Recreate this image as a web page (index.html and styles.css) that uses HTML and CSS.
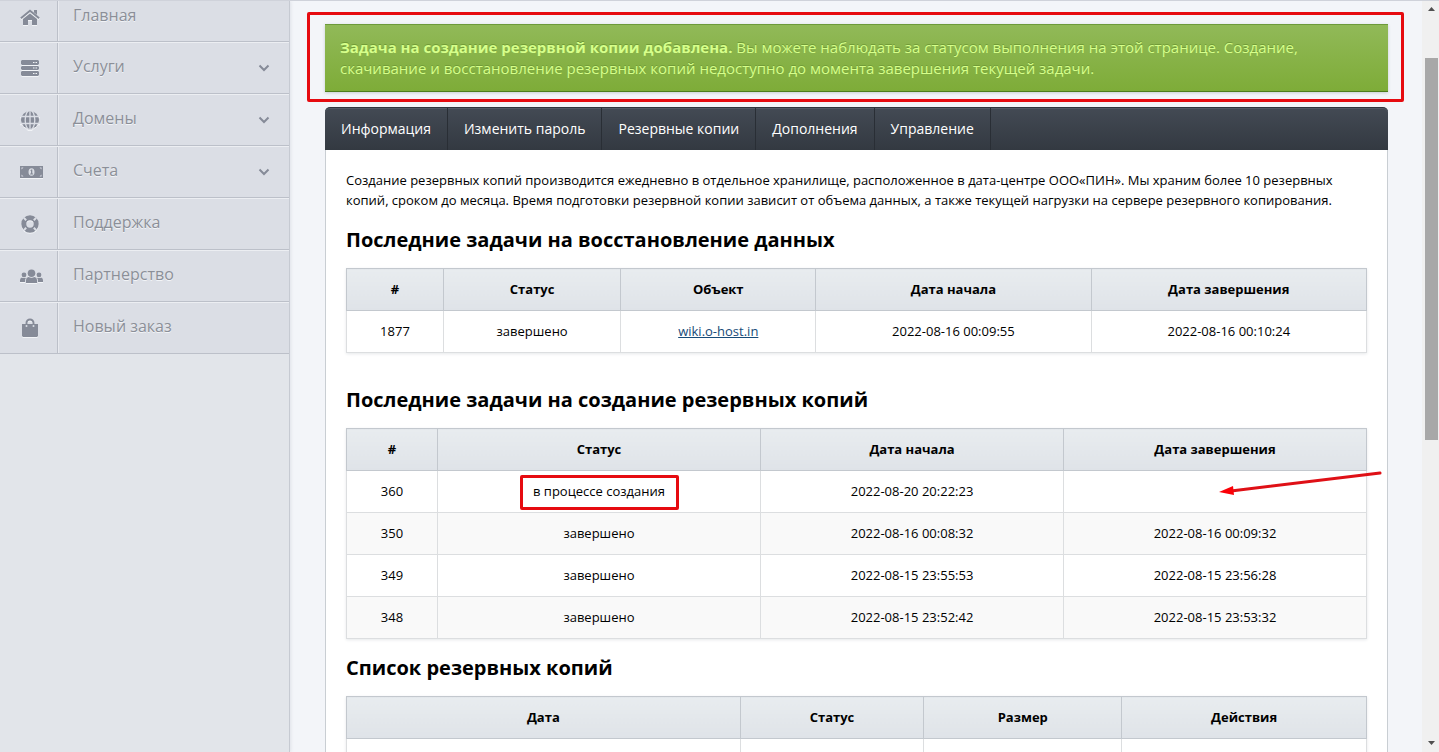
FILE: index.html
```html
<!DOCTYPE html>
<html lang="ru">
<head>
<meta charset="utf-8">
<title>Резервные копии</title>
<link rel="stylesheet" href="styles.css">
</head>
<body>
<div class="page">
  <nav class="sidebar" aria-label="Меню">
    <a class="item" href="#"><span class="icon"><svg width="20" height="17" viewBox="0 0 20 17"><path d="M10 4.400 3 10V16h5v-5h4v5h5v-6z"/><path d="M.9 9.200 10 1.700l9.100 7.500" class="line"/><path d="M14 1h3v5l-3-2.500z"/></svg></span><span class="label">Главная</span></a>
    <a class="item" href="#"><span class="icon"><svg width="20" height="18" viewBox="0 0 20 18"><path fill-rule="evenodd" d="M2 1h16l1 1v3l-1 1H2L1 5V2zM13 3v1h1.500V3zm2.500 0v1H17V3zM2 7h16l1 1v2l-1 1H2l-1-1V8zM13 8.500v1h1.500v-1zm2.500 0v1H17v-1zM2 12h16l1 1v3l-1 1H2l-1-1v-3zM13 14v1h1.500v-1zm2.500 0v1H17v-1z"/></svg></span><span class="label">Услуги</span><svg class="chevron" width="12" height="8" viewBox="0 0 12 8"><path d="m1.500 1.500 4.500 4.500 4.500-4.500"/></svg></a>
    <a class="item" href="#"><span class="icon"><svg width="20" height="20" viewBox="0 0 20 20"><circle cx="10" cy="10" r="9"/><g class="cut"><path d="M0 6.500h20M0 13.500h20M10 0v20"/><ellipse cx="10" cy="10" rx="4.800" ry="10"/></g></svg></span><span class="label">Домены</span><svg class="chevron" width="12" height="8" viewBox="0 0 12 8"><path d="m1.500 1.500 4.500 4.500 4.500-4.500"/></svg></a>
    <a class="item" href="#"><span class="icon shifted"><svg width="23" height="13" viewBox="0 0 23 13"><path d="M0 0h23v12H0z"/><ellipse cx="11.500" cy="6" rx="3" ry="3.800" class="hole"/><path d="M10.300 4.500 11.300 3.500h1v4h.8v1h-3v-1h.9V5z"/><path class="hole" d="M1.500 1.500h2l-2 2zM21.500 1.500h-2l2 2zM1.500 10.500h2l-2-2zM21.500 10.500h-2l2-2z"/></svg></span><span class="label">Счета</span><svg class="chevron" width="12" height="8" viewBox="0 0 12 8"><path d="m1.500 1.500 4.500 4.500 4.500-4.500"/></svg></a>
    <a class="item" href="#"><span class="icon"><svg width="20" height="20" viewBox="0 0 20 20"><circle cx="10" cy="10" r="6.200" class="ring"/><path class="cut" d="m3.800 3.800 2.400 2.400M16.200 3.800l-2.400 2.400M3.800 16.200l2.400-2.400M16.200 16.200l-2.400-2.400"/></svg></span><span class="label">Поддержка</span></a>
    <a class="item" href="#"><span class="icon shifted"><svg width="23" height="15" viewBox="0 0 23 15"><circle cx="11.500" cy="4.300" r="3.800"/><circle cx="4" cy="6" r="2.400"/><circle cx="19" cy="6" r="2.400"/><path d="M6 14v-3q0-2.500 2.500-3 3 1.500 6 0 2.500.5 2.500 3v3zM0 13v-2q0-2 2-2.500 2 1 4 0Q5 10 5 13zM23 13v-2q0-2-2-2.500-2 1-4 0 1 1.500 1 4.500z"/></svg></span><span class="label">Партнерство</span></a>
    <a class="item" href="#"><span class="icon"><svg width="18" height="20" viewBox="0 0 18 20"><path d="M1 6h16v12l-1 1H2l-1-1z"/><path class="line" d="M5.500 6V5a3.500 3.500 0 0 1 7 0v1"/><circle cx="5.500" cy="8" r="1" class="hole"/><circle cx="12.500" cy="8" r="1" class="hole"/></svg></span><span class="label">Новый заказ</span></a>
  </nav>

  <main class="content">
    <div class="alert" role="status"><strong>Задача на создание резервной копии добавлена.</strong> Вы можете наблюдать за статусом выполнения на этой странице. Создание, скачивание и восстановление резервных копий недоступно до момента завершения текущей задачи.</div>

    <nav class="tabs" aria-label="Разделы">
      <a href="#">Информация</a><a href="#">Изменить пароль</a><a href="#">Резервные копии</a><a href="#">Дополнения</a><a href="#">Управление</a>
    </nav>

    <section class="panel">
      <p>Создание резервных копий производится ежедневно в отдельное хранилище, расположенное в дата-центре ООО«ПИН». Мы храним более 10 резервных копий, сроком до месяца. Время подготовки резервной копии зависит от объема данных, а также текущей нагрузки на сервере резервного копирования.</p>

      <h2>Последние задачи на восстановление данных</h2>
      <table class="restore">
        <colgroup><col class="r-id"><col class="r-status"><col class="r-object"><col class="r-date"><col class="r-date"></colgroup>
        <thead><tr><th>#</th><th>Статус</th><th>Объект</th><th>Дата начала</th><th>Дата завершения</th></tr></thead>
        <tbody><tr><td>1877</td><td>завершено</td><td><a href="#">wiki.o-host.in</a></td><td>2022-08-16 00:09:55</td><td>2022-08-16 00:10:24</td></tr></tbody>
      </table>

      <h2>Последние задачи на создание резервных копий</h2>
      <table class="create">
        <colgroup><col class="c-id"><col class="c-status"><col class="c-date"><col class="c-date"></colgroup>
        <thead><tr><th>#</th><th>Статус</th><th>Дата начала</th><th>Дата завершения</th></tr></thead>
        <tbody>
          <tr><td>360</td><td><span class="marked">в процессе создания</span></td><td>2022-08-20 20:22:23</td><td class="pending"><svg class="arrow" width="164" height="26" viewBox="0 0 164 26"><path class="shaft" d="M162 2 13 20"/><path class="head" d="m1 21 14-6 1 9z"/></svg></td></tr>
          <tr><td>350</td><td>завершено</td><td>2022-08-16 00:08:32</td><td>2022-08-16 00:09:32</td></tr>
          <tr><td>349</td><td>завершено</td><td>2022-08-15 23:55:53</td><td>2022-08-15 23:56:28</td></tr>
          <tr><td>348</td><td>завершено</td><td>2022-08-15 23:52:42</td><td>2022-08-15 23:53:32</td></tr>
        </tbody>
      </table>

      <h2>Список резервных копий</h2>
      <table class="copies">
        <colgroup><col class="l-date"><col class="l-status"><col class="l-size"><col class="l-actions"></colgroup>
        <thead><tr><th>Дата</th><th>Статус</th><th>Размер</th><th>Действия</th></tr></thead>
        <tbody><tr><td></td><td></td><td></td><td></td></tr></tbody>
      </table>
    </section>
  </main>

  <div class="scrollbar" aria-hidden="true">
    <svg width="7" height="4" viewBox="0 0 7 4"><path d="M0 4h7L3.500 0z"/></svg>
    <div class="track"><div class="thumb"></div></div>
    <svg width="7" height="4" viewBox="0 0 7 4"><path d="M0 0h7L3.500 4z"/></svg>
  </div>
</div>
</body>
</html>
```

FILE: styles.css
```css
* { box-sizing: border-box; }

body {
  margin: 0;
  font: 13px/20px "Open Sans", "Noto Sans", sans-serif;
  color: #000;
  background: #f3f5f9;
}

.page {
  display: flex;
  height: 100vh;
  overflow: hidden;
  border-top: 1px solid #cfd2da;
}

/* Sidebar */
.sidebar {
  flex: 0 0 290px;
  background: #e2e5ea;
  border-right: 1px solid #c6cad2;
  box-shadow: 1px 0 3px #dfe2e8;
}

.item {
  display: flex;
  align-items: center;
  height: 52px;
  padding-right: 19px;
  background: #dbdee5;
  border-top: 1px solid #eceef2;
  border-bottom: 1px solid #bcc0c9;
  color: #8b8f98;
  font-size: 16px;
  text-decoration: none;
  text-shadow: 0 1px 0 #f2f4f7;
}

.item:first-child { height: 41px; border-top: 0; }
.item:first-child .icon { padding-bottom: 7px; }
.item:first-child .label { padding-bottom: 12px; }

.icon {
  display: flex;
  align-items: center;
  justify-content: center;
  align-self: stretch;
  flex: 0 0 58px;
  padding-left: 3px;
  border-right: 1px solid #bcc0c9;
  box-shadow: 1px 0 0 #e8eaef;
}

.shifted { padding-left: 6px; }

.icon svg { fill: #868b98; filter: drop-shadow(0 1px 0 #f2f4f7); }
.icon .line { fill: none; stroke: #868b98; stroke-width: 2; }
.icon .ring { fill: none; stroke: #868b98; stroke-width: 5; }
.icon .cut { fill: none; stroke: #dbdee5; stroke-width: 1.3; }
.icon path.cut { stroke-width: 2; }
.icon .hole { fill: #dbdee5; }

.label { flex: 1; padding: 0 0 4px 15px; }

.chevron { fill: none; stroke: #868b98; stroke-width: 2; }

/* Content */
.content { flex: 1; min-width: 0; padding: 23px 34px 0 35px; }

.alert {
  position: relative;
  padding: 12px 15px;
  border-top: 1px solid #6d9a3b;
  border-bottom: 1px solid #4d7d1b;
  background: linear-gradient(#91b958, #7eac38);
  box-shadow: 0 1px 3px #c9ced3;
  color: #d6ff8a;
  font-size: 15px;
  line-height: 21px;
  text-shadow: 0 -1px 0 #719b38;
}

.alert::after {
  content: "";
  position: absolute;
  inset: -13px -16px -11px -18px;
  border: 3px solid #e60b10;
  border-radius: 2px;
}

.tabs {
  display: flex;
  margin-top: 15px;
  background: linear-gradient(#434a54, #333941);
  border-top: 1px solid #30353d;
  border-radius: 5px 5px 0 0;
  box-shadow: inset 0 1px 0 #535a65;
}

.tabs a {
  padding: 11px 16px;
  border-right: 1px solid #292e35;
  color: #fff;
  font-size: 14px;
  text-decoration: none;
}

.panel {
  padding: 20px 20px 0;
  background: #fff;
  border: solid #c9ced3;
  border-width: 0 1px;
}

.panel p { margin: 0 0 16px; }

h2 {
  margin: 0 0 15px;
  font-size: 20px;
  line-height: 27px;
  font-weight: 700;
}

table {
  width: 100%;
  margin-bottom: 33px;
  table-layout: fixed;
  border-collapse: collapse;
  border: 1px solid #c9cdd3;
  box-shadow: 0 1px 3px #e6e8eb;
}

.create { margin-bottom: 15px; }

th, td {
  height: 42px;
  padding: 0 0 2px;
  text-align: center;
  border: 1px solid #dcdee0;
}

th {
  border-color: #c3c8ce;
  background: linear-gradient(#e8ecef, #dfe3e8);
  font-weight: 700;
}

tbody tr:nth-child(even) { background: #f9f9f9; }

td a { color: #174b78; }

.r-id { width: 9.5%; }
.r-status { width: 17.4%; }
.r-object { width: 19.1%; }
.r-date { width: 27%; }
.c-id { width: 9%; }
.c-status { width: 32%; }
.c-date { width: 30%; }
.l-date { width: 38.6%; }
.l-status { width: 18%; }
.l-size { width: 19.4%; }
.l-actions { width: 24%; }

/* Annotations */
.marked { position: relative; }

.marked::after {
  content: "";
  position: absolute;
  inset: -7px -14px -10px -13px;
  border: 3px solid #e60b10;
  border-radius: 2px;
}

.pending { position: relative; }
.arrow { position: absolute; top: 0; right: -16px; }
.shaft { stroke: #df1016; stroke-width: 3; stroke-linecap: round; }
.head { fill: #fb0007; }

/* Scrollbar */
.scrollbar {
  display: flex;
  flex-direction: column;
  align-items: center;
  flex: 0 0 17px;
  padding: 6px 1px 7px 3px;
  background: #f0f0f0;
}

.scrollbar svg { fill: #505050; }
.track { flex: 1; width: 100%; padding-top: 47px; }
.thumb { height: 56%; background: #a8a8a8; }
```
